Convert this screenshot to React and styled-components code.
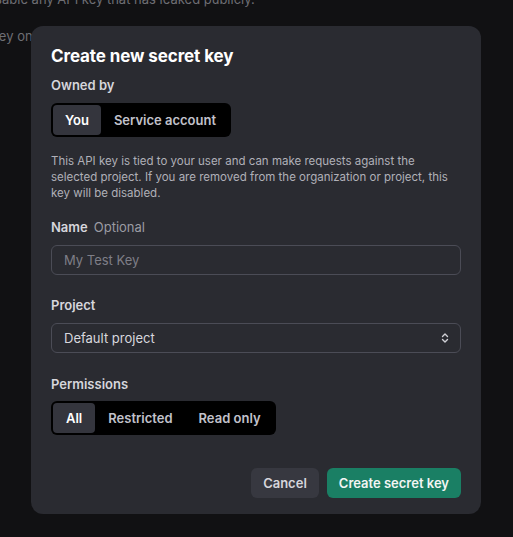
import React, { useState } from "react";
import styled, { createGlobalStyle } from "styled-components";

const GlobalStyle = createGlobalStyle`
  html, body {
    margin: 0;
    padding: 0;
    background: #111113;
    font-family: Inter, "Noto Sans", sans-serif;
    -webkit-font-smoothing: antialiased;
  }
`;

const Page = styled.div`
  position: relative;
  width: 513px;
  height: 537px;
  overflow: hidden;
  background: #111113;
`;

const BackText = styled.p`
  margin: 0;
  color: #6e6e73;
  font-size: 13px;
  line-height: 16px;
  white-space: nowrap;
  margin-left: ${(p) => p.$indent}px;
  padding-top: ${(p) => p.$top}px;
`;

const Modal = styled.div`
  position: absolute;
  left: 31px;
  top: 26px;
  width: 450px;
  height: 488px;
  box-sizing: border-box;
  background: #2a2b31;
  border-radius: 12px;
  padding: 21px 20px 16px;
  display: flex;
  flex-direction: column;
  color: #ececf1;
`;

const Title = styled.h2`
  margin: 0;
  font-size: 17px;
  line-height: 18px;
  font-weight: 700;
  color: #fff;
  letter-spacing: -0.1px;
`;

const Label = styled.div`
  font-size: 13px;
  font-weight: 600;
  color: #d6d6dc;
  line-height: 16px;
  margin-top: ${(p) => p.$mt || 0}px;
  display: flex;
  gap: 6px;
`;

const Muted = styled.span`
  font-weight: 400;
  color: #9b9ba3;
`;

const Segmented = styled.div`
  display: inline-flex;
  align-self: flex-start;
  background: #000;
  border-radius: 6px;
  padding: 2px;
  margin-top: ${(p) => p.$mt || 0}px;
  height: 34px;
  box-sizing: border-box;
`;

const SegButton = styled.button`
  border: 0;
  font-family: inherit;
  font-size: 13px;
  font-weight: 600;
  padding: 0 ${(p) => p.$px || 12}px;
  border-radius: 4px;
  cursor: pointer;
  background: ${(p) => (p.$active ? "#34353d" : "transparent")};
  color: ${(p) => (p.$active ? "#fff" : "#c2c2cb")};
`;

const Description = styled.p`
  margin: 16px 0 0;
  font-size: 11.5px;
  line-height: 16px;
  color: #b0b0b8;
`;

const Field = styled.div`
  margin-top: 10px;
  height: 30px;
  box-sizing: border-box;
  border: 1px solid #4b4c56;
  border-radius: 6px;
  display: flex;
  align-items: center;
  padding: 0 9px 0 12px;
  font-size: 13px;
`;

const Input = styled.input`
  flex: 1;
  background: transparent;
  border: 0;
  outline: none;
  color: #ececf1;
  font-family: inherit;
  font-size: 13px;
  padding: 0;
  &::placeholder {
    color: #7e7e87;
  }
`;

const SelectText = styled.span`
  flex: 1;
  color: #d8d8de;
`;

const Footer = styled.div`
  margin-top: auto;
  display: flex;
  justify-content: flex-end;
  gap: 8px;
`;

const Button = styled.button`
  border: 0;
  height: 30px;
  border-radius: 6px;
  padding: 0 12px;
  font-family: inherit;
  font-size: 13px;
  font-weight: 600;
  cursor: pointer;
  background: ${(p) => (p.$primary ? "#1a7f64" : "#373840")};
  color: ${(p) => (p.$primary ? "#f3f5f4" : "#d6d6dc")};
`;

const Chevrons = () => (
  <svg width="12" height="12" viewBox="0 0 12 12" fill="none" stroke="#d0d0d6" strokeWidth="1.4" strokeLinecap="round" strokeLinejoin="round">
    <path d="M3.5 4.5 6 2l2.5 2.5" />
    <path d="M3.5 7.5 6 10l2.5-2.5" />
  </svg>
);

export default function App() {
  const [owner, setOwner] = useState("you");
  const [perm, setPerm] = useState("all");

  return (
    <>
      <GlobalStyle />
      <Page>
        <BackText $indent={-16} $top={0} style={{ marginTop: -9 }}>
          disable any API key that has leaked publicly.
        </BackText>
        <BackText $indent={-8} $top={21}>key on</BackText>

        <Modal>
          <Title>Create new secret key</Title>
          <Label $mt={12}>Owned by</Label>
          <Segmented $mt={10}>
            <SegButton $active={owner === "you"} $px={12} onClick={() => setOwner("you")}>You</SegButton>
            <SegButton $active={owner === "service"} $px={13} onClick={() => setOwner("service")}>Service account</SegButton>
          </Segmented>

          <Description>
            This API key is tied to your user and can make requests against the selected project. If you are removed from the organization or project, this key will be disabled.
          </Description>

          <Label $mt={18}>
            Name <Muted>Optional</Muted>
          </Label>
          <Field>
            <Input placeholder="My Test Key" />
          </Field>

          <Label $mt={22}>Project</Label>
          <Field>
            <SelectText>Default project</SelectText>
            <Chevrons />
          </Field>

          <Label $mt={23}>Permissions</Label>
          <Segmented $mt={9}>
            <SegButton $active={perm === "all"} $px={13} onClick={() => setPerm("all")}>All</SegButton>
            <SegButton $active={perm === "restricted"} $px={13} onClick={() => setPerm("restricted")}>Restricted</SegButton>
            <SegButton $active={perm === "read"} $px={13} onClick={() => setPerm("read")}>Read only</SegButton>
          </Segmented>

          <Footer>
            <Button>Cancel</Button>
            <Button $primary>Create secret key</Button>
          </Footer>
        </Modal>
      </Page>
    </>
  );
}
